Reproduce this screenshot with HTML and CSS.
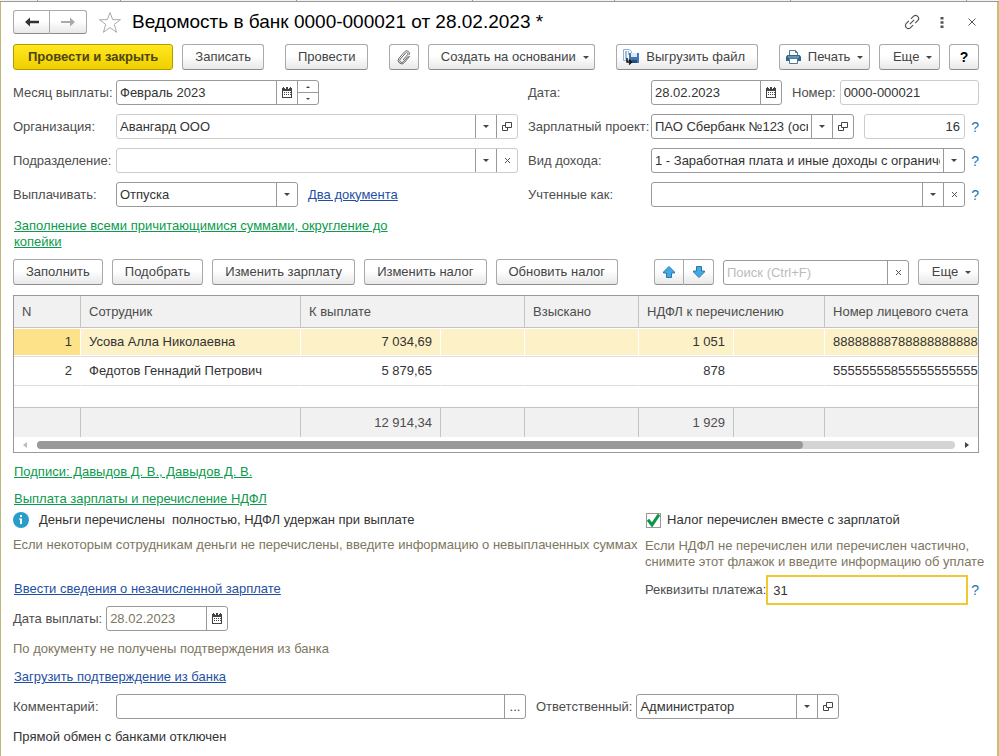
FILE: index.html
```html
<!DOCTYPE html>
<html lang="ru">
<head>
<meta charset="utf-8">
<title>Ведомость в банк 0000-000021 от 28.02.2023</title>
<link rel="stylesheet" href="styles.css">
</head>

<body>

<svg class="defs" width="0" height="0" aria-hidden="true">
<symbol id="calendar" viewBox="0 0 10 11">
<path d="M0 1h10v10H0z" fill="#444"/>
<path d="M1 4h8v6H1z" fill="#fff"/>
<path d="M1 0h1v2H1zM8 0h1v2H8zM4 0h2v1H4z" fill="#444"/>
<path d="M3 1h1v1H3zM6 1h1v1H6z" fill="#fff"/>
<path d="M2 5h1v1H2zM4 5h1v1H4zM6 5h1v1H6zM2 7h1v1H2zM4 7h1v1H4zM6 7h1v1H6zM8 5h1v1H8zM8 7h1v1H8z" fill="#444"/>
</symbol>
<symbol id="open" viewBox="0 0 10 10">
<path d="M3.5.5h6v5h-6zM3 3.5H.5v5h5V6" fill="none" stroke="#444"/>
</symbol>
<symbol id="clear" viewBox="0 0 7 7">
<path d="M1 1l5 5M6 1L1 6" fill="none" stroke="#555"/>
</symbol>
<symbol id="arrow-up" viewBox="0 0 12 12">
<path d="M6 .5L11.5 6v1H8.500v4.500h-5V7H.5V6z" fill="#41a9e6" stroke="#2b77a8"/>
</symbol>
</svg>

<div class="tabs"><i class="first"></i><i></i><i></i><i class="small"></i><i></i><i></i><i></i></div>

<div class="window">

<header class="title">
<div class="pair nav">
<button class="btn" aria-label="Назад"><svg width="14" height="10" viewBox="0 0 14 10"><path d="M0 5l5-4.500v3.200h9v2.600H5v3.200z" fill="#333"/></svg></button>
<button class="btn" aria-label="Вперед"><svg width="14" height="10" viewBox="0 0 14 10"><path d="M14 5L9 .5v3.400H0v2.200h9v3.400z" fill="#aaa"/></svg></button>
</div>
<svg class="star" width="24" height="23" viewBox="0 0 24 23"><path d="M12 1.500l2.700 7.200h7.800l-6.200 4.700 2.300 7.900L12 16.600l-6.600 4.700 2.300-7.900L1.500 8.700h7.800z" fill="none" stroke="#aaa"/></svg>
<h1>Ведомость в банк 0000-000021 от 28.02.2023 *</h1>
<div class="tools">
<button class="tool" aria-label="Ссылка"><svg width="16" height="16" viewBox="0 0 16 16"><g fill="none" stroke="#555" stroke-width="1.200" transform="rotate(-45 8 8)"><path d="M6.500 5H3a3 3 0 0 0 0 6h3.500M9.500 5H13a3 3 0 0 1 0 6H9.500M5 8h6"/></g></svg></button>
<button class="tool" aria-label="Меню"><svg width="4" height="13" viewBox="0 0 4 13"><path d="M.5 1h3v2.500h-3zM.5 5.200h3v2.500h-3zM.5 9.400h3v2.500h-3z" fill="#555"/></svg></button>
<button class="tool" aria-label="Закрыть"><svg width="8" height="8" viewBox="0 0 8 8"><path d="M.5.5l7 7M7.500.5l-7 7" stroke="#555"/></svg></button>
</div>
</header>

<div class="bar">
<button class="btn main">Провести и закрыть</button>
<button class="btn">Записать</button>
<button class="btn group">Провести</button>
<button class="btn square group" aria-label="Файлы"><svg width="14" height="15" viewBox="0 0 14 15"><path d="M11.500 6L6.300 11.800a2 2 0 0 1-3-2.700L8.600 3a1.300 1.300 0 0 1 2 1.700L6 10M12.700 6.200L7.300 12.600a3.400 3.400 0 0 1-5.300-4.400L7.500 1.900a2.700 2.700 0 0 1 4.400 3.300" fill="none" stroke="#666"/></svg></button>
<button class="btn caret">Создать на основании</button>
<button class="btn icon group"><svg width="16" height="16" viewBox="0 0 16 16"><path d="M.5.5h6l2 2v9h-8z" fill="#f4f8fc" stroke="#8fb2d4"/><path d="M2 3h2M5 3h1M2 5h2M5 5h2M2 7h2M2 9h2" stroke="#4c83ba"/><path d="M6 4h10v10H7l-1-1z" fill="#3f76b3"/><path d="M8 4h6v4H8z" fill="#dce9f6"/><path d="M9 11h5v3H9z" fill="#24507f"/><path d="M4 9v4h4M6 10.500L8.500 13 6 15.500" fill="none" stroke="#111" stroke-width="1.500"/></svg>Выгрузить файл</button>
<button class="btn icon caret group"><svg width="15" height="14" viewBox="0 0 15 14"><path d="M3.500 6V.5h6l2 2V6" fill="#fff" stroke="#4f7796"/><path d="M9.500.5v2h2" fill="none" stroke="#4f7796"/><path d="M1.500 5h12l1.500 1.500V11H0V6.500z" fill="#34658a"/><path d="M2 7h11" stroke="#9ec2dc"/><path d="M3.500 8.500h8v5h-8z" fill="#fff" stroke="#4f7796"/></svg>Печать</button>
<button class="btn caret last">Еще</button>
<button class="btn square help">?</button>
</div>

<div class="form">
<div class="side">

<div class="row">
<label for="month">Месяц выплаты:</label>
<div class="field medium">
<input id="month" type="text" value="Февраль 2023">
<button aria-label="Календарь"><svg width="10" height="11"><use href="#calendar"/></svg></button>
<div class="spin"><button class="up" aria-label="Больше"></button><button class="down" aria-label="Меньше"></button></div>
</div>
</div>

<div class="row">
<label for="org">Организация:</label>
<div class="field pale grow">
<select id="org"><option>Авангард ООО</option></select>
<button aria-label="Открыть"><svg width="10" height="10"><use href="#open"/></svg></button>
</div>
</div>

<div class="row">
<label for="dept">Подразделение:</label>
<div class="field pale grow">
<select id="dept"><option></option></select>
<button aria-label="Очистить"><svg width="7" height="7"><use href="#clear"/></svg></button>
</div>
</div>

<div class="row">
<label for="pay">Выплачивать:</label>
<div class="field short">
<select id="pay"><option>Отпуска</option></select>
</div>
<a class="next" href="#">Два документа</a>
</div>

</div>
<div class="side right">

<div class="row">
<label for="date">Дата:</label>
<div class="field date">
<input id="date" type="text" value="28.02.2023">
<button aria-label="Календарь"><svg width="10" height="11"><use href="#calendar"/></svg></button>
</div>
<label class="inner" for="number">Номер:</label>
<div class="field pale grow"><input id="number" type="text" value="0000-000021"></div>
</div>

<div class="row">
<label for="project">Зарплатный проект:</label>
<div class="field medium">
<select id="project"><option>ПАО Сбербанк №123 (основной)</option></select>
<button aria-label="Открыть"><svg width="10" height="10"><use href="#open"/></svg></button>
</div>
<div class="field pale grow next"><input class="num" type="text" value="16" aria-label="Номер реестра"></div>
<a class="ask" href="#">?</a>
</div>

<div class="row">
<label for="income">Вид дохода:</label>
<div class="field grow">
<select id="income"><option>1 - Заработная плата и иные доходы с ограничением взыскания</option></select>
</div>
<a class="ask" href="#">?</a>
</div>

<div class="row">
<label for="counted">Учтенные как:</label>
<div class="field grow">
<select id="counted"><option></option></select>
<button aria-label="Очистить"><svg width="7" height="7"><use href="#clear"/></svg></button>
</div>
<a class="ask" href="#">?</a>
</div>

</div>
</div>

<p class="fill"><a class="green" href="#">Заполнение всеми причитающимися суммами, округление до копейки</a></p>

<div class="bar">
<button class="btn">Заполнить</button>
<button class="btn">Подобрать</button>
<button class="btn">Изменить зарплату</button>
<button class="btn">Изменить налог</button>
<button class="btn">Обновить налог</button>
<div class="pair move last">
<button class="btn" aria-label="Вверх"><svg width="12" height="12"><use href="#arrow-up"/></svg></button>
<button class="btn" aria-label="Вниз"><svg class="flip" width="12" height="12"><use href="#arrow-up"/></svg></button>
</div>
<div class="field search">
<input type="text" placeholder="Поиск (Ctrl+F)" aria-label="Поиск">
<button aria-label="Очистить"><svg width="7" height="7"><use href="#clear"/></svg></button>
</div>
<button class="btn caret">Еще</button>
</div>

<div class="list">
<table>
<colgroup><col class="c-n"><col class="c-name"><col class="c-sum"><col class="c-sum2"><col class="c-hold"><col class="c-tax"><col class="c-tax2"><col></colgroup>
<thead>
<tr><th>N</th><th>Сотрудник</th><th colspan="2">К выплате</th><th>Взыскано</th><th colspan="2">НДФЛ к перечислению</th><th>Номер лицевого счета</th></tr>
</thead>
<tbody>
<tr class="current"><td class="num">1</td><td>Усова Алла Николаевна</td><td class="num">7 034,69</td><td></td><td></td><td class="num">1 051</td><td></td><td>88888888788888888888</td></tr>
<tr><td class="num">2</td><td>Федотов Геннадий Петрович</td><td class="num">5 879,65</td><td></td><td></td><td class="num">878</td><td></td><td>55555555855555555555</td></tr>
<tr class="blank"><td colspan="8"></td></tr>
</tbody>
<tfoot>
<tr><td></td><td></td><td class="num">12 914,34</td><td></td><td></td><td class="num">1 929</td><td></td><td></td></tr>
</tfoot>
</table>
<div class="scroll">
<svg width="4" height="6" viewBox="0 0 4 6"><path d="M4 0v6L0 3z" fill="#bbb"/></svg>
<div class="track"><div class="thumb" style="width: 83.4%"></div></div>
<svg width="4" height="6" viewBox="0 0 4 6"><path d="M0 0v6l4-3z" fill="#444"/></svg>
</div>
</div>

<p class="line sign"><a class="green" href="#">Подписи: Давыдов Д. В., Давыдов Д. В.</a></p>
<p class="line"><a class="green" href="#">Выплата зарплаты и перечисление НДФЛ</a></p>

<div class="payout">
<div class="done">
<p class="info"><svg width="16" height="16" viewBox="0 0 16 16"><circle cx="8" cy="8" r="8" fill="#2a9ccb"/><path d="M7 3h2v2H7zM6 6.500h3V12H7V7.500H6z" fill="#fff"/></svg>Деньги перечислены&nbsp; полностью, НДФЛ удержан при выплате</p>
<p class="hint">Если некоторым сотрудникам деньги не перечислены, введите информацию о невыплаченных суммах</p>
<p class="line enter"><a href="#">Ввести сведения о незачисленной зарплате</a></p>
<div class="row">
<label class="auto" for="paydate">Дата выплаты:</label>
<div class="field paydate">
<input id="paydate" type="text" value="28.02.2023">
<button aria-label="Календарь"><svg width="10" height="11"><use href="#calendar"/></svg></button>
</div>
</div>
</div>
<div class="tax">
<label class="check"><input type="checkbox" checked>Налог перечислен вместе с зарплатой</label>
<p class="hint">Если НДФЛ не перечислен или перечислен частично,<br>снимите этот флажок и введите информацию об уплате</p>
<div class="row">
<label class="auto" for="details">Реквизиты платежа:</label>
<input class="focus" id="details" type="text" value="31">
<a class="ask" href="#">?</a>
</div>
</div>
</div>

<p class="line bank">По документу не получены подтверждения из банка</p>
<p class="line load"><a href="#">Загрузить подтверждение из банка</a></p>

<div class="row">
<label for="comment">Комментарий:</label>
<div class="field comment">
<input id="comment" type="text">
<button aria-label="Выбрать">...</button>
</div>
<label class="inner" for="person">Ответственный:</label>
<div class="field medium">
<select id="person"><option>Администратор</option></select>
<button aria-label="Открыть"><svg width="10" height="10"><use href="#open"/></svg></button>
</div>
</div>

<p class="line off">Прямой обмен с банками отключен</p>

</div>
</body>
</html>
```
FILE: styles.css
```css
* {
 box-sizing: border-box;
}

body {
 margin: 0;
 min-height: 100vh;
 display: flex;
 flex-direction: column;
 background: #fff;
 color: #333;
 font-family: "Liberation Sans", Arial, sans-serif;
 font-size: 13px;
 line-height: 16px;
}

h1, p {
 margin: 0;
}

button, input, select {
 font: inherit;
 color: inherit;
}

svg {
 display: block;
 flex: none;
}

a {
 color: #1f4fa3;
}

a.green {
 color: #0c9a4c;
}

.defs {
 position: absolute;
}

/* bottom edge of the section tabs */
.tabs {
 display: flex;
 height: 2px;
 padding-left: 37px;
 background: #f2f2f2;
 border-bottom: 1px solid #999;
 overflow: hidden;
}

.tabs i {
 flex: 0 0 176px;
 border-left: 1px solid #999;
}

.tabs .first {
 flex-basis: 83px;
}

.tabs .small {
 flex-basis: 142px;
}

.window {
 flex: 1;
 padding: 8px 18px 8px 12px;
 border-left: 1px solid #c3b67b;
 border-right: 2px solid #cdbf6d;
}

/* title */
.title {
 display: flex;
 align-items: center;
 height: 24px;
 margin-bottom: 10px;
}

.title h1 {
 flex: 1;
 font-size: 19px;
 font-weight: normal;
 line-height: 24px;
 color: #000;
}

.star {
 margin: 0 10px 0 11px;
}

.tools {
 display: flex;
 gap: 8px;
 margin-right: -4px;
}

.tool {
 display: flex;
 align-items: center;
 justify-content: center;
 width: 22px;
 height: 22px;
 padding: 0;
 border: 0;
 background: none;
}

/* buttons */
.bar {
 display: flex;
 gap: 9px;
}

.btn {
 display: flex;
 align-items: center;
 justify-content: center;
 height: 26px;
 padding: 0 12px;
 border: 1px solid #aaa;
 border-bottom-color: #8c8c8c;
 border-radius: 3px;
 background: linear-gradient(#fff 45%, #e8e8e8);
 color: #444;
 white-space: nowrap;
}

.btn.main {
 padding: 0 14px;
 border-color: #b39b00;
 background: linear-gradient(#ffe81f, #f0cf00);
 font-weight: bold;
 color: #4d4510;
}

.btn.group {
 margin-left: 12px;
}

.btn.square {
 width: 30px;
 padding: 0;
}

.btn.help {
 font-size: 14px;
 font-weight: bold;
 color: #000;
}

.btn.icon {
 padding-left: 6px;
}

.btn.icon svg {
 margin-right: 7px;
}

.btn.caret {
 min-width: 61px;
 padding-right: 6px;
}

.btn.caret::after {
 content: "";
 margin-left: 7px;
 border: 3px solid transparent;
 border-top-color: #444;
 border-bottom: 0;
}

.btn.last,
.pair.last {
 margin-left: auto;
}

.pair {
 display: flex;
}

.pair .btn {
 width: 30px;
 padding: 0;
}

.pair.nav .btn {
 width: 37px;
 height: 24px;
}

.pair .btn:first-child {
 border-radius: 3px 0 0 3px;
}

.pair .btn:last-child {
 border-left: 0;
 border-radius: 0 3px 3px 0;
}

.flip {
 transform: rotate(180deg);
}

/* form */
.form {
 display: flex;
 gap: 10px;
 margin: 10px 0 11px;
}

.side {
 display: flex;
 flex: 1;
 flex-direction: column;
 gap: 9px;
}

.side.right {
 flex: 0 0 451px;
}

.row {
 display: flex;
 align-items: center;
}

.row label {
 flex: 0 0 103px;
 color: #4d4d4d;
 white-space: nowrap;
}

.right .row label {
 flex-basis: 123px;
}

.row label.inner,
.right .row label.inner {
 flex: none;
 margin: 0 4px 0 10px;
}

.row label.auto {
 flex: none;
 margin-right: 4px;
}

.field {
 display: flex;
 height: 25px;
 border: 1px solid #999;
 border-radius: 3px;
 background: #fff;
}

.field.pale {
 border-color: #ccc;
}

.field.grow {
 flex: 1;
 min-width: 0;
}

.field.medium {
 width: 203px;
}

.field.short {
 width: 182px;
}

.field.date {
 width: 131px;
}

.field.paydate {
 width: 122px;
 color: #7d7660;
}

.field.comment {
 flex: 0 1 410px;
}

.field.search {
 width: 186px;
 margin-top: 1px;
}

.next {
 margin-left: 10px;
}

.field input,
.field select {
 flex: 1;
 width: 0;
 min-width: 0;
 padding: 0 4px 0 3px;
 border: 0;
 border-radius: 3px;
 outline: 0;
 background: none;
}

.field select {
 appearance: none;
 padding-right: 24px;
 background: url("data:image/svg+xml,%3Csvg xmlns='http://www.w3.org/2000/svg' width='21' height='23'%3E%3Cpath d='M.5 0v23' stroke='%23999'/%3E%3Cpath d='M8 10h6l-3 3z' fill='%23444'/%3E%3C/svg%3E") no-repeat right;
}

.field input.num {
 text-align: right;
}

.field input::placeholder {
 color: #bbb;
}

.field > button {
 display: flex;
 align-items: center;
 justify-content: center;
 width: 21px;
 padding: 0;
 border: 0;
 border-left: 1px solid #999;
 background: none;
 color: #444;
}

.spin {
 display: flex;
 flex-direction: column;
 width: 21px;
 border-left: 1px solid #999;
}

.spin button {
 display: flex;
 align-items: center;
 justify-content: center;
 flex: 1;
 padding: 0;
 border: 0;
 background: none;
}

.spin .up {
 border-bottom: 1px solid #999;
}

.spin button::after {
 content: "";
 border: 2px solid transparent;
}

.spin .up::after {
 border-top: 0;
 border-bottom-color: #444;
}

.spin .down::after {
 border-bottom: 0;
 border-top-color: #444;
}

.ask {
 width: 14px;
 color: #1b75b5;
 font-size: 14px;
 text-align: right;
 text-decoration: none;
}

.fill {
 width: 400px;
 margin-bottom: 9px;
 padding-left: 1px;
}

/* employees */
.list {
 margin: 10px 0 11px;
 border: 1px solid #999;
}

table {
 width: 100%;
 table-layout: fixed;
 border-collapse: separate;
 border-spacing: 0;
}

.c-n { width: 67px; }
.c-name { width: 220px; }
.c-sum { width: 140px; }
.c-sum2 { width: 84px; }
.c-hold { width: 114px; }
.c-tax { width: 95px; }
.c-tax2 { width: 91px; }

th, td {
 height: 29px;
 padding: 0 8px;
 border-right: 1px solid transparent;
 border-bottom: 1px solid #ddd;
 text-align: left;
 font-weight: normal;
 white-space: nowrap;
 overflow: hidden;
}

td.num {
 text-align: right;
}

th, tfoot td {
 height: 32px;
 border-right-color: #c4c4c4;
 border-bottom-color: #c4c4c4;
 background: #f1f1f1;
 color: #4d4d4d;
}

th:last-child, td:last-child {
 padding-right: 0;
 border-right: 0;
}

.current td {
 border-right-color: #fff;
 background: #fdf1c7;
 box-shadow: inset 0 1px #fff, inset 0 -1px #fff;
}

.current td:first-child {
 background: #fee28a;
}

.blank td {
 height: 22px;
 border-bottom-color: #c4c4c4;
}

tfoot td {
 height: 29px;
 border-bottom: 0;
}

.scroll {
 display: flex;
 align-items: center;
 gap: 10px;
 height: 15px;
 padding: 0 9px;
}

.track {
 flex: 1;
 height: 8px;
 border-radius: 4px;
 background: #d4d4d4;
}

.thumb {
 height: 8px;
 border-radius: 4px;
 background: #999;
}

/* payout and tax */
.line {
 padding-left: 1px;
}

.sign {
 margin-bottom: 11px;
}

.payout {
 display: flex;
 gap: 10px;
 margin: 5px 0 10px;
}

.done {
 flex: 1;
 min-width: 0;
}

.tax {
 flex: 0 0 334px;
 min-width: 0;
}

.info {
 display: flex;
 align-items: center;
 gap: 10px;
}

.hint, .bank {
 color: #7d7660;
}

.hint {
 margin-top: 9px;
 white-space: nowrap;
}

.tax .hint {
 margin-top: 10px;
}

.enter {
 margin: 28px 0 9px;
}

.check {
 display: flex;
 align-items: center;
 gap: 6px;
}

.check input {
 appearance: none;
 width: 15px;
 height: 15px;
 margin: 0 0 0 1px;
 border: 1px solid #999;
 background: url("data:image/svg+xml,%3Csvg xmlns='http://www.w3.org/2000/svg' width='15' height='14'%3E%3Cpath d='M2 6l4 5 7-10' fill='none' stroke='%230b9648' stroke-width='3'/%3E%3C/svg%3E") no-repeat center;
}

.tax .row {
 margin-top: 5px;
}

.focus {
 flex: 1;
 min-width: 0;
 height: 30px;
 padding: 0 5px;
 border: 2px solid #f0c930;
 outline: 0;
}

.tax .row .auto {
 margin-right: 0;
}

.tax .ask {
 width: 11px;
}

.bank {
 padding-left: 0;
}

.load {
 margin: 12px 0 9px;
}

.off {
 margin-top: 10px;
 padding-left: 0;
}
```
